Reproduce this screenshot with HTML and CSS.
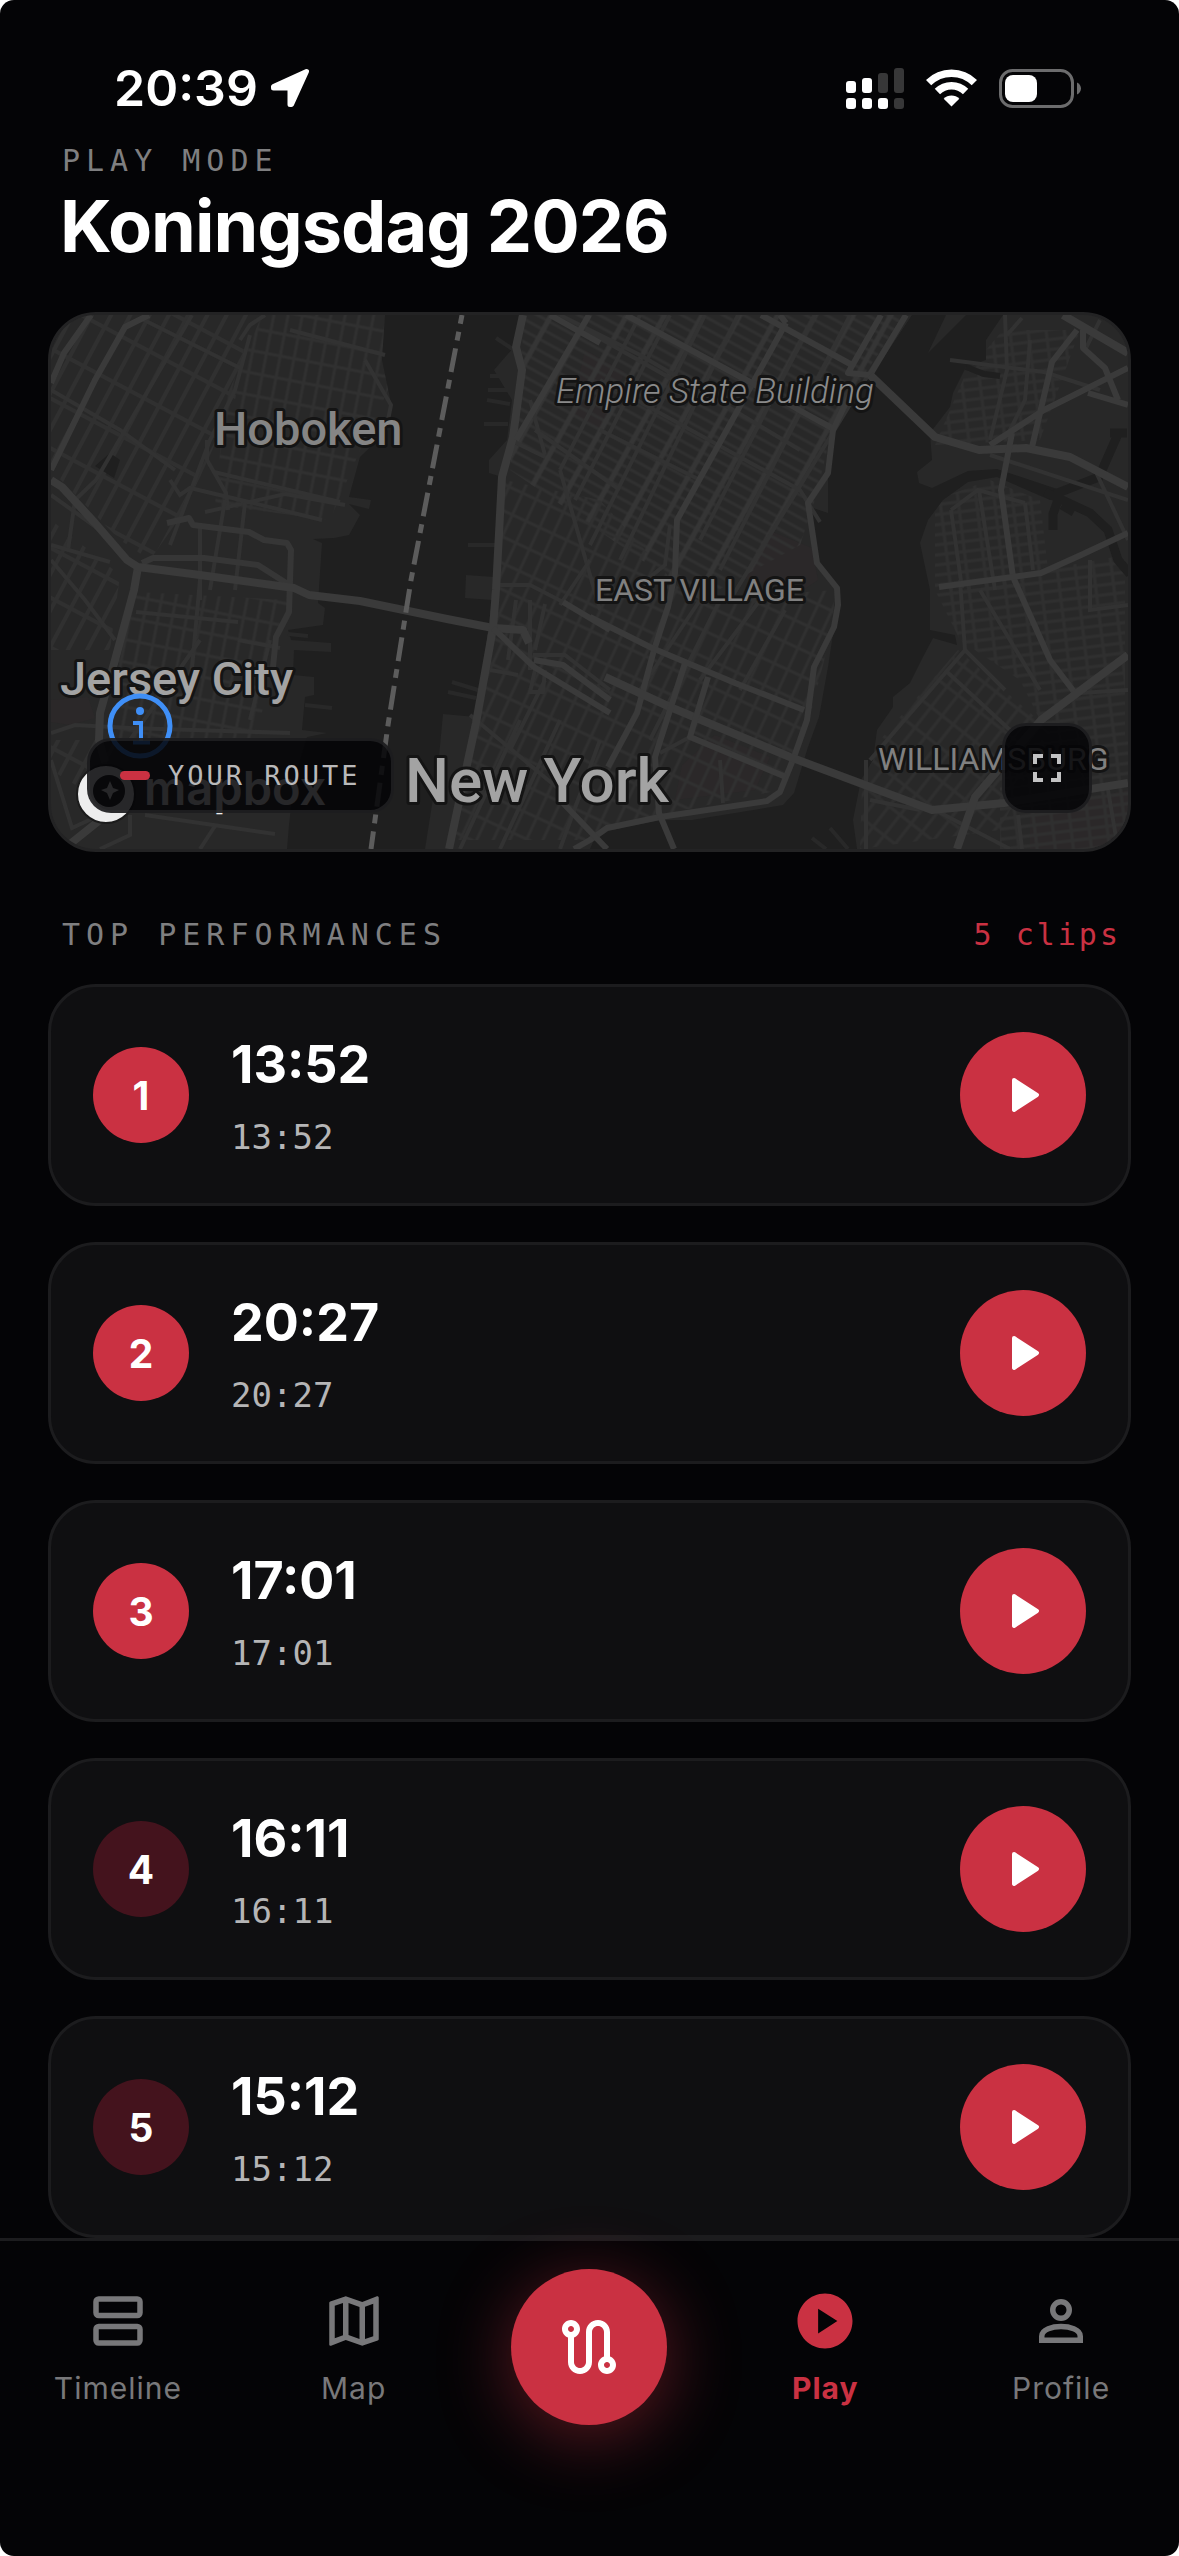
FILE: index.html
```html
<!DOCTYPE html>
<html lang="en">
<head>
    <meta charset="UTF-8">
    <meta name="viewport" content="width=device-width, initial-scale=1.0">
    <title>Koningsdag 2026</title>
    <link rel="stylesheet" href="styles.css">
</head>
<body>
    <div class="app">
        <div class="status-bar">
            <div class="status-time">
                <span>20:39</span>
                <svg width="40" height="40" viewBox="0 0 40 40" fill="#fff" stroke="#fff" stroke-width="5" stroke-linejoin="round"><path d="M36.500 3.500L3.500 18.500V20H20V36.500H21.500Z"/></svg>
            </div>
            <div class="status-icons">
                <svg width="58" height="41" viewBox="0 0 58 41" fill="#fff">
                    <rect x="0" y="13" width="10" height="12" rx="3"/>
                    <rect x="16" y="10" width="10" height="15" rx="3"/>
                    <rect x="32" y="5" width="10" height="20" rx="3" fill="#373738"/>
                    <rect x="48" y="0" width="10" height="25" rx="3" fill="#373738"/>
                    <rect x="0" y="30" width="10" height="11" rx="3"/>
                    <rect x="16" y="30" width="10" height="11" rx="3"/>
                    <rect x="32" y="30" width="10" height="11" rx="3"/>
                    <rect x="48" y="30" width="10" height="11" rx="3" fill="#373738"/>
                </svg>
                <svg width="51" height="38" viewBox="0 0 51 38" fill="none" stroke="#fff" stroke-width="7.500">
                    <path d="M2.600 13.700A32.400 32.400 0 0 1 48.400 13.700"/>
                    <path d="M11.400 22.500A20 20 0 0 1 39.600 22.500"/>
                    <path d="M25.500 37.500L17.700 29.700A11 11 0 0 1 33.300 29.700Z" fill="#fff" stroke="none"/>
                </svg>
                <svg width="82" height="39" viewBox="0 0 82 39">
                    <rect x="1.500" y="1.500" width="72" height="36" rx="12" fill="none" stroke="#6c6c6d" stroke-width="3"/>
                    <rect x="6" y="6" width="32" height="27" rx="8" fill="#fff"/>
                    <path d="M78 13.500C80.500 14.500 82 17 82 19.500S80.500 24.500 78 25.500Z" fill="#6c6c6d"/>
                </svg>
            </div>
        </div>

        <main class="content">
            <header class="page-header">
                <p class="eyebrow">PLAY MODE</p>
                <h1>Koningsdag 2026</h1>
            </header>

            <section class="map-card">
                <svg class="map-canvas" viewBox="51 315 1077 534" preserveAspectRatio="xMidYMid slice" role="img" aria-label="Route map">
                    <defs>
                        <pattern id="midtown" width="33" height="10" patternUnits="userSpaceOnUse" patternTransform="rotate(29)">
                            <path d="M0 5H33" stroke="#303030" stroke-width="3"/><path d="M8 0V10" stroke="#353535" stroke-width="5"/>
                        </pattern>
                        <pattern id="heights" width="17" height="44" patternUnits="userSpaceOnUse" patternTransform="rotate(28)">
                            <path d="M8 0V44M0 20H17" stroke="#303030" stroke-width="4"/>
                        </pattern>
                        <pattern id="hoboken" width="14" height="22" patternUnits="userSpaceOnUse" patternTransform="rotate(11)">
                            <path d="M7 0V22M0 10H14" stroke="#303030" stroke-width="3"/>
                        </pattern>
                        <pattern id="village" width="15" height="24" patternUnits="userSpaceOnUse" patternTransform="rotate(25)">
                            <path d="M7 0V24M0 10H15" stroke="#303030" stroke-width="3"/>
                        </pattern>
                        <pattern id="greenpoint" width="18" height="10" patternUnits="userSpaceOnUse" patternTransform="rotate(-7)">
                            <path d="M8 0V10M0 5H18" stroke="#2f2f2f" stroke-width="3"/>
                        </pattern>
                        <pattern id="williamsburg" width="14" height="26" patternUnits="userSpaceOnUse" patternTransform="rotate(38)">
                            <path d="M7 0V26M0 10H14" stroke="#2f2f2f" stroke-width="3"/>
                        </pattern>
                    </defs>
                    <rect x="51" y="315" width="1077" height="534" fill="#282828"/>
                    <!-- parks -->
                    <g fill="#2b2829">
                        <path d="M585 350L625 372L600 430L570 415Z"/>
                        <path d="M768 530L812 548L818 580L800 592L745 578Z"/>
                        <path d="M715 735L770 757L755 790L675 800L682 765Z"/>
                        <path d="M51 700L88 697L95 718L70 725L51 722Z"/>
                        <path d="M1030 812L1128 790V849H1030Z"/>
                    </g>
                    <!-- street grids -->
                    <path fill="url(#heights)" d="M51 315H250L235 400L185 510L150 560L120 540L51 470Z"/>
                    <path fill="url(#hoboken)" d="M262 315H385L388 390L358 455L330 520L215 505L225 400Z"/>
                    <path fill="url(#hoboken)" d="M136 592L288 600L270 680L255 740L118 740L115 660Z"/>
                    <path fill="url(#heights)" d="M51 520L120 575L110 650H51ZM51 740H120L100 800L51 770Z"/>
                    <path fill="url(#midtown)" d="M525 315H905L850 395L832 430L815 500L800 545L700 600L510 470Z"/>
                    <path fill="url(#village)" d="M504 480L600 500L690 600L835 590L832 630L805 735L780 790L660 815L590 840H455L478 720Z"/>
                    <path fill="url(#greenpoint)" d="M1003 330H1080L1040 440L935 445L965 375ZM935 500L990 480L1040 500L1048 570L1000 590L935 590Z"/>
                    <path fill="url(#greenpoint)" d="M935 590L1125 555V740H1050L1020 680L960 640Z"/>
                    <path fill="url(#williamsburg)" d="M958 650L1050 730L1000 830L860 849L862 785L880 740Z"/>
                    <path fill="url(#greenpoint)" d="M1000 740H1128V849H1000Z"/>
                    <!-- rivers -->
                    <g fill="#1f1f1f">
                        <path d="M385 315L382 360L391 403L388 430L360 457L349 497L371 500L369 509L349 504L360 515L349 535L334 538L313 539L322 543L318 603L325 608L323 625L288 630L291 640L331 643V652L294 650L293 675L314 677V695L305 697L302 730L327 733L307 737L294 780L289 825L287 849H425L438 767L443 714L476 717L478 707L492 600L465 598L466 575L494 577L502 477L489 473V460L507 440L512 400L494 370L514 347L522 315Z"/>
                        <path d="M912 315L872 375L852 397L834 430L828 473V513L810 507L814 533L819 567L837 590L839 600L834 627L828 667L819 717L808 747L794 793L783 805L692 820L660 820L597 833L590 849H857L853 820L861 780L873 760L877 730L893 707V697L910 683L923 657L933 638L957 645L955 635L930 630V590L920 543L928 520L943 500L968 482L997 477L1050 500L1060 490L997 469L968 471L932 488L919 483L917 472L932 460L930 433L950 407L953 393L966 367L986 360V340L1003 315Z"/>
                        <path d="M95 466L110 453L120 460L114 478Z"/>
                    </g>
                    <path fill="#282828" d="M946 315L928 353L966 315Z"/>
                    <g fill="none" stroke="#1f1f1f" stroke-width="9">
                        <path d="M1045 492L1090 513L1108 530L1118 560L1130 574M1055 494L1099 477L1118 434M1110 433H1127M1058 500L1053 514V530M1062 505L1074 512"/>
                        <path d="M966 367L984 374L1000 376" stroke-width="6"/>
                    </g>
                    <g fill="none" stroke="#282828" stroke-width="4">
                        <path d="M490 376H512M488 390H512M487 400L510 404M484 424H508M468 545H500M452 682L478 690M448 692L476 698M305 705L332 708M288 634L308 636M812 838L826 849M830 828L848 849M496 338L514 350"/>
                    </g>
                    <!-- minor roads -->
                    <g fill="none" stroke="#323232" stroke-width="4">
                        <path d="M192 315L96 480L75 500L68 550M51 390L120 430L175 470M250 335L235 390L210 440L170 545M140 318L240 368"/>
                        <path d="M265 315L250 325L240 340M290 330L385 355M365 360L391 405L388 420M207 440V460L226 493L228 510M214 472L340 502M170 480L180 495L190 488L249 502L322 520M205 512L285 494L345 505"/>
                        <path d="M225 500L210 590M245 503L235 590M51 495L100 530M51 545L110 562M51 560L85 600L115 640M200 525V600M270 640L250 720M200 580L190 690"/>
                        <path d="M136 612L238 622M238 640L280 648M51 733L75 725L130 728L290 733M130 740L200 640M105 760L110 800M51 760L72 828L100 815M130 815V835L100 849M215 826L200 849M145 815L275 834"/>
                        <path d="M560 315L640 355L700 390L800 450M585 330L700 395M600 380L800 490L820 522M600 430L700 480M640 315L560 470M670 315L575 500M705 315L590 545M738 315L620 560M815 315L700 540M850 315L720 570M905 315L730 600M560 470L600 610M530 400L545 455M535 430L620 490M510 440L545 457"/>
                        <path d="M670 525L665 565L640 585M500 585H530L563 602M516 600L508 660M530 600V670M545 604L535 650M490 670L518 675M533 655H565L610 690M535 670L530 692H543L545 670M545 680L510 750M590 560L560 605M720 600L650 740M700 600L640 690M760 600L700 680M785 610L740 690M690 737L660 753M720 760L723 803M470 715L560 790M520 720L460 849M560 720L500 849M600 740L560 849"/>
                        <path d="M1005 315L1007 370L990 440M1030 340L1025 400L1005 440M950 360L1044 372L1100 390M1007 335L1022 318M1086 348L1100 320M990 455L1128 500M1095 470L1128 540M979 490L995 590M951 510L962 588M1025 503L1033 570M951 510L978 490L1025 503M960 580L965 650L870 760M965 650L1005 690M945 670L1010 730M870 800L920 810M935 810L1010 849M866 760V849M1090 560V610L1128 605M980 590L1040 690M1018 815L1022 849M1108 790L1118 849M1080 693L1128 690"/>
                    </g>
                    <!-- main roads -->
                    <g fill="none" stroke="#3a3a3a" stroke-width="6" stroke-linejoin="round">
                        <path d="M91 315L64 353L51 383M149 315L125 327L95 380L51 470"/>
                        <path d="M142 563L153 558H204L258 565L294 588M167 523L189 518L193 525L249 532L264 540L287 543L291 550L289 612L276 637L273 667" stroke="#363636"/>
                        <path d="M138 567L134 590L115 660L100 713L99 740L105 762M100 820L70 844" stroke-width="8"/>
                        <path d="M51 480L62 487L95 523L127 560L138 567L200 575L294 588L309 595L360 601L447 619L493 628L523 630L529 643" stroke-width="8"/>
                        <path d="M523 315L516 347L522 370L513 437L502 477L496 590L493 628L476 723L449 849" stroke-width="8"/>
                        <path d="M589 315L516 440M786 323L677 520L675 573L668 607L654 650L637 713L608 767M550 315L600 343M786 323L780 315"/>
                        <path d="M881 315L848 373L870 375M906 315L870 375M626 315L750 382L808 415L832 428M761 315L852 365"/>
                        <path d="M852 390L833 430L828 473L808 503L817 563L837 588L838 605L834 627L814 667L807 720L794 757L780 792L767 801L660 817L607 828L590 840L574 849"/>
                        <path d="M870 375L935 437L979 450L1026 448L1070 457L1128 487M1063 315L1128 353M605 677L670 707L790 757L932 810L1004 803L1128 783" stroke-width="8"/>
                        <path d="M1128 368L1044 410L990 445M1077 330L1052 362L1032 447M1012 433L1001 490L1013 577L1050 660L1075 693M1083 330V348L1105 368L1118 400M1088 393L1128 405"/>
                        <path d="M1128 655L1041 720L975 797L957 849" stroke-width="8"/>
                        <path d="M590 617L652 648L735 683L804 710M1128 533L1081 555L1041 573L939 587M493 628L534 667L610 713M563 602L610 630M534 660L563 665L610 700M708 677L690 737L786 777M685 663L655 757L659 813L674 849M563 803L607 849"/>
                    </g>
                    <path d="M462 315L411 580L388 725L371 849" fill="none" stroke="#5c5c5c" stroke-width="5" stroke-dasharray="24 8 9 8" stroke-dashoffset="15"/>
                    <!-- place names -->
                    <g class="map-labels">
                        <text x="214" y="445" class="label-city dim">Hoboken</text>
                        <text x="60" y="695" class="label-city">Jersey City</text>
                        <text x="405" y="802" class="label-metro">New York</text>
                        <text x="556" y="403" class="label-poi">Empire State Building</text>
                        <text x="595" y="601" class="label-area">EAST VILLAGE</text>
                        <text x="878" y="770" class="label-area">WILLIAMSBURG</text>
                    </g>
                    <!-- map attribution -->
                    <circle cx="106" cy="794" r="29" fill="#eee" stroke="#1c1c1c" stroke-width="2"/>
                    <circle cx="109" cy="791" r="16" fill="#222"/>
                    <path d="M110 781L113 788L119 790L113 793L110 800L107 793L101 790L107 788Z" fill="#eee"/>
                    <text x="144" y="805" class="map-brand">mapbox</text>
                    <circle cx="140" cy="726" r="30" fill="none" stroke="#3f8ff7" stroke-width="5"/>
                    <circle cx="140" cy="711" r="4" fill="#3f8ff7"/>
                    <path d="M133 723H141V742M133 742.500H150" fill="none" stroke="#3f8ff7" stroke-width="4"/>
                </svg>
                <div class="map-overlay">
                    <div class="legend"><span class="legend-line"></span>YOUR ROUTE</div>
                    <button class="expand-btn" type="button" aria-label="Full screen">
                        <svg width="48" height="48" viewBox="0 0 24 24" fill="#c2c2c3"><path d="M7 14H5v5h5v-2H7v-3zm-2-4h2V7h3V5H5v5zm12 7h-3v2h5v-5h-2v3zM14 5v2h3v3h2V5h-5z"/></svg>
                    </button>
                </div>
            </section>

            <div class="section-head">
                <h2>TOP PERFORMANCES</h2>
                <span class="clip-count">5 clips</span>
            </div>

            <ol class="clips">
                <li class="clip">
                    <span class="rank">1</span>
                    <div class="clip-info"><strong>13:52</strong><span>13:52</span></div>
                    <button class="play-btn" type="button" aria-label="Play clip 1"><svg width="66" height="66" viewBox="0 0 66 66"><path d="M24 18L47 33L24 48Z"/></svg></button>
                </li>
                <li class="clip">
                    <span class="rank">2</span>
                    <div class="clip-info"><strong>20:27</strong><span>20:27</span></div>
                    <button class="play-btn" type="button" aria-label="Play clip 2"><svg width="66" height="66" viewBox="0 0 66 66"><path d="M24 18L47 33L24 48Z"/></svg></button>
                </li>
                <li class="clip">
                    <span class="rank">3</span>
                    <div class="clip-info"><strong>17:01</strong><span>17:01</span></div>
                    <button class="play-btn" type="button" aria-label="Play clip 3"><svg width="66" height="66" viewBox="0 0 66 66"><path d="M24 18L47 33L24 48Z"/></svg></button>
                </li>
                <li class="clip">
                    <span class="rank rank-low">4</span>
                    <div class="clip-info"><strong>16:11</strong><span>16:11</span></div>
                    <button class="play-btn" type="button" aria-label="Play clip 4"><svg width="66" height="66" viewBox="0 0 66 66"><path d="M24 18L47 33L24 48Z"/></svg></button>
                </li>
                <li class="clip">
                    <span class="rank rank-low">5</span>
                    <div class="clip-info"><strong>15:12</strong><span>15:12</span></div>
                    <button class="play-btn" type="button" aria-label="Play clip 5"><svg width="66" height="66" viewBox="0 0 66 66"><path d="M24 18L47 33L24 48Z"/></svg></button>
                </li>
            </ol>
        </main>

        <nav class="tab-bar">
            <a class="tab" href="#timeline">
                <svg width="66" height="66" viewBox="0 0 24 24" fill="none" stroke="currentColor" stroke-width="2"><rect x="4" y="4" width="16" height="6" rx="1"/><rect x="4" y="14" width="16" height="6" rx="1"/></svg>
                Timeline
            </a>
            <a class="tab" href="#map">
                <svg width="66" height="66" viewBox="0 0 24 24" fill="currentColor"><path d="M20.500 3l-.16.03L15 5.100 9 3 3.360 4.900c-.21.07-.36.25-.36.48V20.500c0 .28.22.5.5.5l.16-.03L9 18.900l6 2.100 5.640-1.900c.21-.07.36-.25.36-.48V3.500c0-.28-.22-.5-.5-.5zM10 5.470l4 1.400v11.660l-4-1.400V5.470zm-5 .99l3-1.010v11.700l-3 1.160V6.460zm14 11.080l-3 1.010V6.860l3-1.160v11.840z"/></svg>
                Map
            </a>
            <button class="route-btn" type="button" aria-label="Start route">
                <svg width="72" height="72" viewBox="0 0 24 24" fill="#fff"><path d="M19 15.180V7c0-2.210-1.790-4-4-4s-4 1.790-4 4v10c0 1.100-.9 2-2 2s-2-.9-2-2V8.820C8.160 8.400 9 7.300 9 6c0-1.660-1.340-3-3-3S3 4.340 3 6c0 1.300.84 2.400 2 2.820V17c0 2.210 1.790 4 4 4s4-1.790 4-4V7c0-1.100.9-2 2-2s2 .9 2 2v8.180c-1.160.41-2 1.510-2 2.820 0 1.660 1.340 3 3 3s3-1.340 3-3c0-1.300-.84-2.400-2-2.820zM6 7c-.55 0-1-.45-1-1s.45-1 1-1 1 .45 1 1-.45 1-1 1zm12 12c-.55 0-1-.45-1-1s.45-1 1-1 1 .45 1 1-.45 1-1 1z"/></svg>
            </button>
            <a class="tab active" href="#play">
                <svg width="66" height="66" viewBox="0 0 24 24" fill="currentColor"><path d="M12 2C6.480 2 2 6.480 2 12s4.480 10 10 10 10-4.480 10-10S17.520 2 12 2zM9.500 16.500v-9l7 4.500-7 4.500z"/></svg>
                Play
            </a>
            <a class="tab" href="#profile">
                <svg width="66" height="66" viewBox="0 0 24 24" fill="none" stroke="currentColor" stroke-width="2"><circle cx="12" cy="8" r="3"/><path d="M5 19v-1.500C5 15 9 14 12 14s7 1 7 3.500V19z"/></svg>
                Profile
            </a>
        </nav>
    </div>
</body>
</html>
```

FILE: styles.css
```css
* {
    box-sizing: border-box;
}
body {
    margin: 0;
    background-color: #fff;
    font-family: Inter, "Liberation Sans", sans-serif;
    color: #fff;
}
h1, h2, p, ol {
    margin: 0;
    padding: 0;
}
svg {
    display: block;
}
button {
    padding: 0;
    border: none;
    cursor: pointer;
    display: flex;
    align-items: center;
    justify-content: center;
}
.app {
    min-height: 100vh;
    display: flex;
    flex-direction: column;
    background-color: #040406;
    border-radius: 14px;
    overflow: hidden;
}

/* Status bar */
.status-bar {
    display: flex;
    justify-content: space-between;
    align-items: center;
    height: 141px;
    padding: 35px 98px 0 114px;
}
.status-time {
    display: flex;
    align-items: center;
    gap: 12px;
    font-size: 50px;
    font-weight: 600;
}
.status-icons {
    display: flex;
    align-items: center;
    gap: 22px;
}

/* Header */
.content {
    flex: 1;
    padding: 0 48px;
}
.page-header {
    padding: 0 12px;
    margin-bottom: 41px;
}
.eyebrow,
.section-head {
    font-family: "DejaVu Sans Mono", monospace;
    font-size: 30px;
    line-height: 40px;
    color: #7f7f80;
}
.eyebrow {
    padding-left: 2px;
}
.eyebrow,
.section-head h2 {
    font-size: 30px;
    font-weight: 400;
    letter-spacing: 6px;
}
.page-header h1 {
    font-size: 72px;
    font-weight: 700;
    line-height: 90px;
    letter-spacing: -1px;
}

/* Map */
.map-card {
    display: grid;
    border: 3px solid #232324;
    border-radius: 48px;
    overflow: hidden;
    background-color: #282828;
}
.map-canvas,
.map-overlay {
    grid-area: 1 / 1;
    width: 100%;
}
.map-overlay {
    z-index: 1;
    display: flex;
    justify-content: space-between;
    align-items: flex-end;
    padding: 36px;
}
.map-labels text {
    font-family: Roboto, sans-serif;
    fill: #a3a3a3;
    stroke: #141414;
    stroke-width: 6px;
    stroke-linejoin: round;
    paint-order: stroke;
}
.map-labels .label-city {
    font-size: 47px;
    font-weight: 500;
}
.map-labels .dim {
    fill: #858585;
}
.map-labels .label-metro {
    font-size: 62px;
    font-weight: 500;
}
.map-labels .label-poi {
    font-size: 35px;
    font-style: italic;
    font-weight: 300;
    fill: #8a8a8a;
}
.map-labels .label-area {
    font-size: 32px;
    fill: #808080;
}
.map-brand {
    font-family: Inter, sans-serif;
    font-size: 47px;
    font-weight: 600;
    fill: #eee;
}
.legend,
.expand-btn {
    background-color: rgba(4, 4, 6, 0.85);
    border: 3px solid rgba(50, 50, 52, 0.5);
    border-radius: 24px;
}
.legend {
    display: flex;
    align-items: center;
    gap: 18px;
    height: 75px;
    padding: 0 30px;
    font-family: "DejaVu Sans Mono", monospace;
    font-size: 27px;
    letter-spacing: 3px;
    color: #b9b9ba;
}
.legend-line {
    width: 30px;
    height: 9px;
    border-radius: 5px;
    background-color: #ca3142;
}
.expand-btn {
    width: 90px;
    height: 90px;
}

/* Clips */
.section-head {
    display: flex;
    justify-content: space-between;
    padding: 0 10px 0 14px;
    margin: 63px 0 29px;
}
.clip-count {
    color: #ca3142;
    letter-spacing: 3px;
}
.clips {
    list-style: none;
    display: flex;
    flex-direction: column;
    gap: 36px;
}
.clip {
    display: flex;
    align-items: center;
    gap: 42px;
    height: 222px;
    padding: 0 42px;
    background-color: #0f0f11;
    border: 3px solid #1c1c1e;
    border-radius: 48px;
}
.rank {
    display: flex;
    align-items: center;
    justify-content: center;
    width: 96px;
    height: 96px;
    border-radius: 50%;
    background-color: #ca3142;
    font-size: 39px;
    font-weight: 700;
}
.rank-low {
    background-color: #44131d;
}
.clip-info {
    flex: 1;
    display: flex;
    flex-direction: column;
    gap: 18px;
}
.clip-info strong {
    font-size: 52px;
    font-weight: 700;
    line-height: 66px;
}
.clip-info span {
    font-family: "DejaVu Sans Mono", monospace;
    font-size: 34px;
    line-height: 42px;
    color: #b5b5b6;
}
.play-btn {
    width: 126px;
    height: 126px;
    border-radius: 50%;
    background-color: #ca3142;
}
.play-btn path {
    fill: #fff;
    stroke: #fff;
    stroke-width: 4px;
    stroke-linejoin: round;
}

/* Tab bar */
.tab-bar {
    display: grid;
    grid-template-columns: repeat(5, 1fr);
    justify-items: center;
    align-items: start;
    padding-bottom: 131px;
    border-top: 3px solid #1c1c1e;
}
.tab {
    display: flex;
    flex-direction: column;
    align-items: center;
    gap: 16px;
    padding-top: 47px;
    font-size: 30px;
    font-weight: 400;
    line-height: 36px;
    letter-spacing: 1px;
    color: #78787a;
    text-decoration: none;
}
.tab.active {
    color: #ca3142;
    font-weight: 700;
}
.route-btn {
    width: 156px;
    height: 156px;
    margin-top: 28px;
    border-radius: 50%;
    background-color: #ca3142;
    box-shadow: 0 12px 72px rgba(202, 49, 66, 0.45);
}
```
